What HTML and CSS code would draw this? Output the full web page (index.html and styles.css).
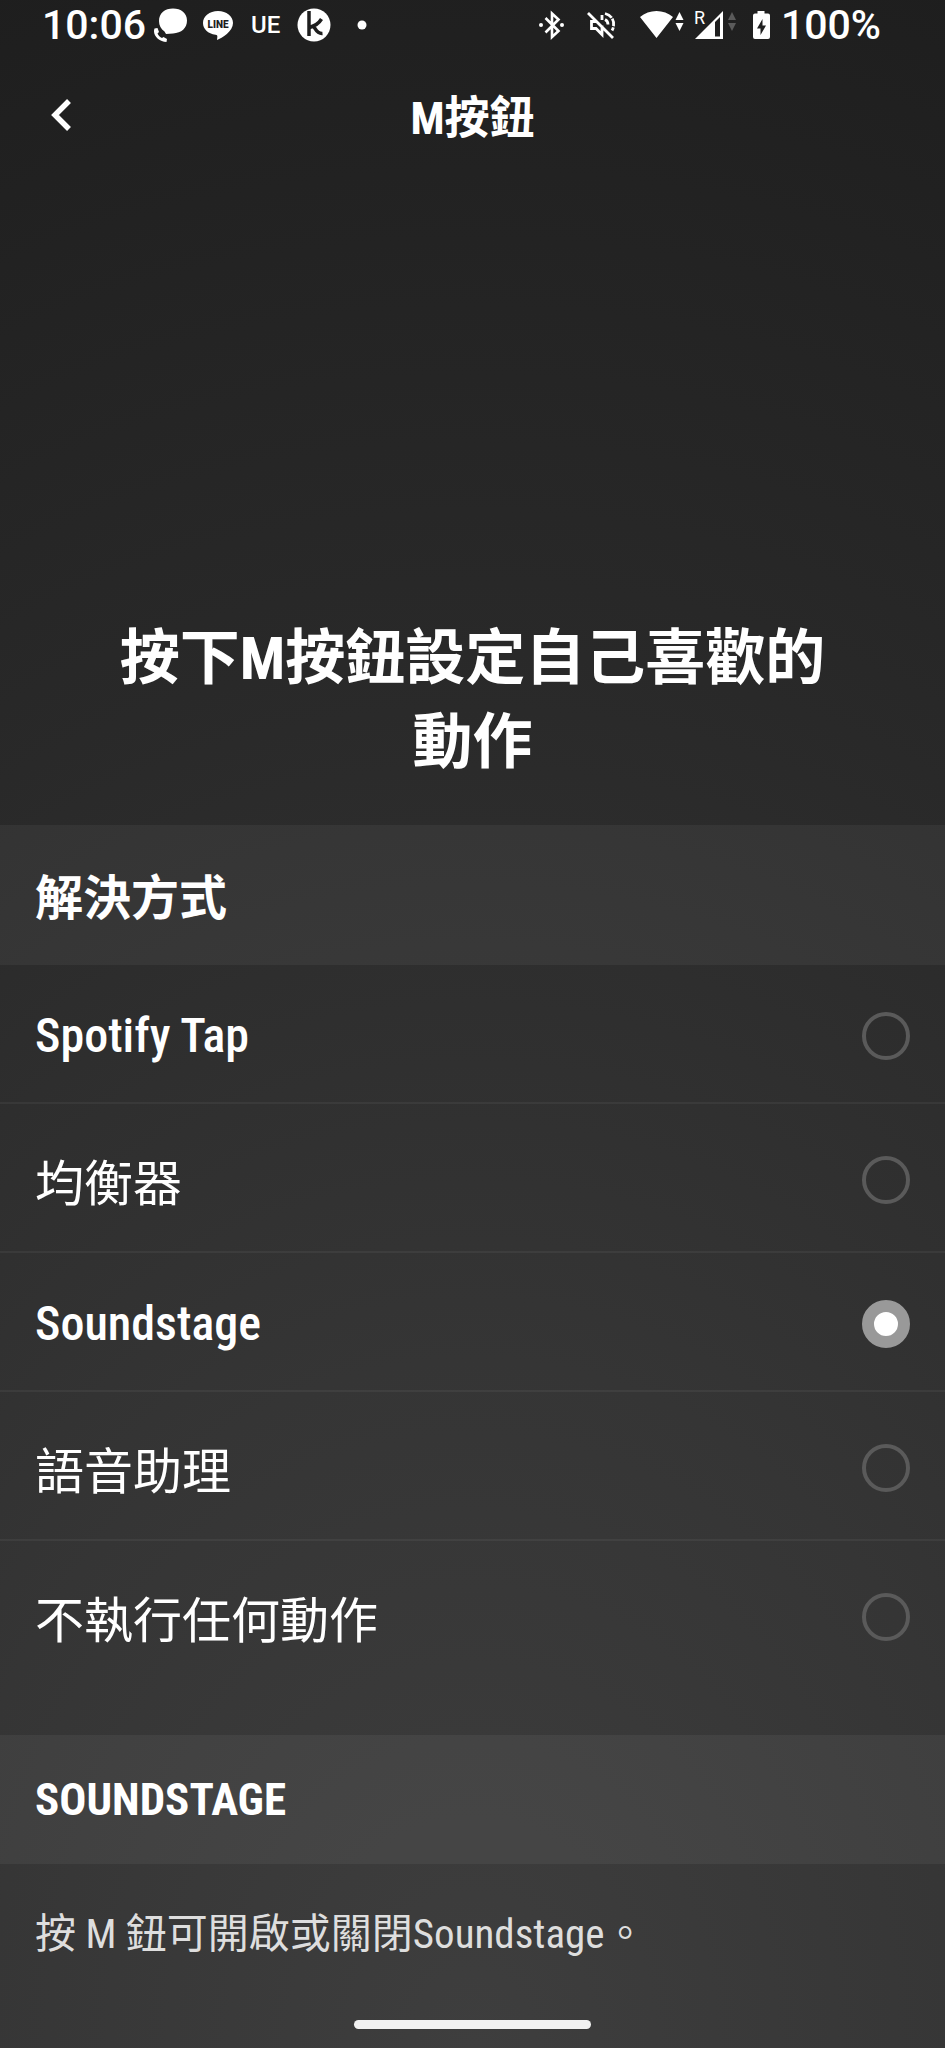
FILE: index.html
```html
<!DOCTYPE html>
<html lang="zh-Hant">
<head>
<meta charset="utf-8">
<meta name="viewport" content="width=device-width, initial-scale=1">
<title>M按鈕</title>
<link rel="stylesheet" href="styles.css">
</head>
<body>
<div class="screen">
  <div class="status">
    <div class="status-left">
      <span class="status-text">10:06</span>
      <svg class="app-icon" viewBox="0 0 34 34" aria-hidden="true"><path fill="#fff" d="M20 .5C28 .5 34 5 34 12.500S28.500 25 20 25.500L13 26 11.500 23.500C8 21 6 17.500 6 13 6 5 12 .5 20 .5z"/><path fill="#fff" d="M1.500 20.500l3-.500 1.500 4-1.500 1.500c1 2 2.500 3.500 4.500 4.500l1.500-1 3.500 2-.500 3C6 34-1 27 1.500 20.500z"/></svg>
      <svg class="app-icon" viewBox="0 0 34 34" aria-hidden="true"><path fill="#fff" d="M17 3C8.500 3 2 8.200 2 15c0 6 5 10.800 12.500 11.700 1.800.3 2 1 1.800 2.500L16 32C21 30 32 23.500 32 15 32 8.200 25.500 3 17 3z"/><text x="17" y="19.500" text-anchor="middle" class="line-word">LINE</text></svg>
      <span class="app-icon ue">UE</span>
      <svg class="app-icon" viewBox="0 0 34 34" aria-hidden="true"><circle cx="17" cy="17" r="16.500" fill="#fff"/><path d="M12 3v25M24.500 11c-3 5-7 7-12 8.500M16 18c2.500 1.500 3 8 9.500 7.500" fill="none" stroke="#1e1e1e" stroke-width="3.500"/></svg>
      <svg class="app-icon" viewBox="0 0 34 34" aria-hidden="true"><circle cx="17" cy="17" r="4.500" fill="#fff"/></svg>
    </div>
    <div class="status-right">
      <svg width="38" height="34" viewBox="0 0 38 34" aria-hidden="true"><path d="M6.500 9.500l13 13-6.500 6V5l6.500 6-13 13" transform="translate(1 .5)" fill="none" stroke="#fff" stroke-width="2.600"/><circle cx="3" cy="17" r="2" fill="#fff"/><circle cx="24" cy="17" r="2" fill="#fff"/></svg>
      <svg width="44" height="34" viewBox="0 0 44 34" aria-hidden="true"><g transform="translate(1 0)" fill="none" stroke="#fff" stroke-width="2.800"><path d="M1 5l25 25M9.500 13.500H4.500v7H9l6 6v-9M15 7v5M18 11.500c2 1 3 3 3 5"/><path d="M18 5.500c8 2 11 10 7 17" stroke-dasharray="8 1"/></g></svg>
      <svg width="44" height="34" viewBox="0 0 44 34" aria-hidden="true"><path fill="#fff" d="M0 9C9 1 24 1 33 9L16.500 30zM35.500 12l4-8 4 8zM35.500 15h8l-4 8z"/></svg>
      <svg width="48" height="34" viewBox="0 0 48 34" aria-hidden="true"><path fill="#fff" fill-rule="evenodd" d="M1 31L29 3v28zM21 14v14.500h5V9z"/><text x="0" y="16" class="roaming">R</text><path fill="#5a5a5a" d="M34 12l4-8 4 8zM34 15h8l-4 8z"/></svg>
      <svg width="19" height="34" viewBox="0 0 19 34" aria-hidden="true"><path fill="#fff" fill-rule="evenodd" d="M5.500 3h7v2.500H16q2 0 2 2V29q0 2-2 2H3q-2 0-2-2V7.500q0-2 2-2h2.500zM10.500 11L5 20.500h3.500V27L14 17.500h-3.500z"/></svg>
      <span class="status-text">100%</span>
    </div>
  </div>

  <header class="header">
    <button class="back" type="button" aria-label="返回"><svg width="24" height="34" viewBox="0 0 24 34" aria-hidden="true"><path d="M21 3L7 17l14 14" fill="none" stroke="#fff" stroke-width="5.500"/></svg></button>
    <h1 class="title">M按鈕</h1>
  </header>

  <main>
    <div class="hero"><p class="hero-text">按下M按鈕設定自己喜歡的動作</p></div>

    <h2 class="section cjk" id="solutions">解決方式</h2>
    <div class="options" role="radiogroup" aria-labelledby="solutions">
      <label class="option latin"><span>Spotify Tap</span><input class="radio" type="radio" name="action"></label>
      <label class="option"><span class="name">均衡器</span><input class="radio" type="radio" name="action"></label>
      <label class="option latin"><span>Soundstage</span><input class="radio" type="radio" name="action" checked></label>
      <label class="option"><span class="name">語音助理</span><input class="radio" type="radio" name="action"></label>
      <label class="option"><span class="name">不執行任何動作</span><input class="radio" type="radio" name="action"></label>
    </div>

    <h2 class="section caps">SOUNDSTAGE</h2>
    <p class="description">按 M 鈕可開啟或關閉Soundstage。</p>
  </main>

  <div class="home-bar"></div>
</div>
</body>
</html>
```

FILE: styles.css
```css
* {
  box-sizing: border-box;
}

body {
  margin: 0;
  background: #1e1e1e;
  color: #fff;
  font-family: "Roboto Condensed", "Arial Narrow", "Liberation Sans", "Noto Sans CJK TC", sans-serif;
}

h1, h2, p {
  margin: 0;
}

.screen {
  display: flex;
  flex-direction: column;
  min-height: 100vh;
  background: radial-gradient(ellipse 180% 105% at 50% 100%, #3e3e3e 0%, #353535 32%, #292929 65%, #1e1e1e 100%);
}

.status {
  display: flex;
  justify-content: space-between;
  align-items: center;
  height: 50px;
  padding: 0 64px 0 42px;
  font-family: Roboto, sans-serif;
  font-weight: 500;
}

.status-left,
.status-right {
  display: flex;
  align-items: center;
}

.status-left {
  gap: 14px;
}

.status-left .status-text {
  margin-right: -7px;
}

.status-right {
  gap: 10px;
}

.status-text {
  font-size: 41px;
  line-height: 50px;
}

.app-icon {
  width: 34px;
  height: 34px;
}

.ue {
  padding-left: 2px;
  overflow: hidden;
  font-size: 24px;
  line-height: 34px;
}

.line-word {
  font: 900 10px Roboto, sans-serif;
  fill: #1e1e1e;
}

.roaming {
  font: 400 18px Roboto, sans-serif;
  fill: #fff;
}

.header {
  display: grid;
  grid-template-columns: 1fr auto 1fr;
  align-items: center;
  height: 130px;
  padding: 0 48px;
}

.back {
  justify-self: start;
  display: flex;
  padding: 0;
  border: 0;
  background: none;
}

.title {
  padding-top: 8px;
  font-size: 45px;
  line-height: 68px;
  font-weight: 700;
}

.hero {
  padding: 437px 110px 40px;
}

.hero-text {
  font-size: 60px;
  line-height: 84px;
  font-weight: 700;
  text-align: center;
}

.section {
  padding: 40px 35px;
  background: rgba(255, 255, 255, 0.05);
  font-weight: 700;
}

.cjk {
  padding: 44px 35px 36px;
  font-size: 48px;
  line-height: 60px;
}

.caps {
  font-size: 45px;
  line-height: 49px;
}

.option {
  display: flex;
  justify-content: space-between;
  align-items: center;
  padding: 42px 35px 37px;
  border-bottom: 2px solid rgba(255, 255, 255, 0.05);
  font-size: 49px;
  line-height: 58px;
}

.option:last-child {
  padding-bottom: 84px;
  border-bottom: 0;
}

.name {
  padding-top: 10px;
}

.latin {
  font-size: 48px;
  font-weight: 500;
}

.radio {
  appearance: none;
  width: 48px;
  height: 48px;
  margin: 0;
  border: 4px solid #5a5a5a;
  border-radius: 50%;
}

.radio:checked {
  border: 12px solid #999;
  background: #fff;
}

.description {
  padding: 40px 35px 36px;
  color: #dedede;
  font-size: 41px;
  line-height: 60px;
}

.home-bar {
  align-self: center;
  width: 25%;
  height: 9px;
  margin: auto 0 19px;
  border-radius: 5px;
  background: #f2f2f2;
}
```
